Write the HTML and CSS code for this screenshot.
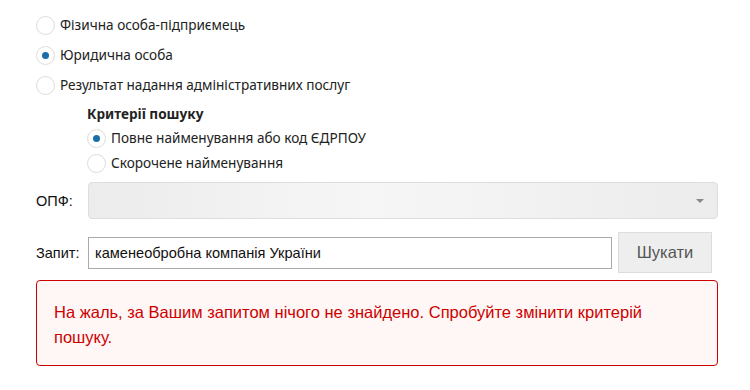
FILE: index.html
```html
<!DOCTYPE html>
<html lang="uk">

<head>
    <meta charset="UTF-8">
    <meta name="viewport" content="width=device-width, initial-scale=1.0">
    <title>Пошук</title>
    <link rel="stylesheet" href="styles.css">
</head>

<body>
    <div class="search-form">
        <div class="types">
            <label class="radio"><span class="dot"></span>Фізична особа-підприємець</label>
            <label class="radio"><span class="dot checked"></span>Юридична особа</label>
            <label class="radio"><span class="dot"></span>Результат надання адміністративних послуг</label>
        </div>
        <div class="criteria">
            <div class="criteria-title">Критерії пошуку</div>
            <label class="radio small"><span class="dot checked"></span>Повне найменування або код ЄДРПОУ</label>
            <label class="radio small"><span class="dot"></span>Скорочене найменування</label>
        </div>
        <div class="row opf">
            <span class="label">ОПФ:</span>
            <div class="select"><span class="arrow"></span></div>
        </div>
        <div class="row query">
            <span class="label">Запит:</span>
            <input type="text" value="каменеобробна компанія України" spellcheck="false">
            <button>Шукати</button>
        </div>
        <div class="error">
            На жаль, за Вашим запитом нічого не знайдено. Спробуйте змінити критерій пошуку.
        </div>
    </div>
</body>

</html>
```

FILE: styles.css
```css
* {
    margin: 0;
    padding: 0;
    box-sizing: border-box;
}

body {
    background: #fff;
    font-family: 'Noto Sans', sans-serif;
    color: #222;
}

.search-form {
    padding: 15px 32px 0 36px;
}

.types {
    display: flex;
    flex-direction: column;
    gap: 10px;
}

.radio {
    display: flex;
    align-items: center;
    font-size: 13.6px;
    line-height: 20px;
    color: #222;
}

.dot {
    width: 19px;
    height: 19px;
    border: 1px solid #ddd;
    border-radius: 50%;
    margin-right: 5px;
    display: flex;
    align-items: center;
    justify-content: center;
    flex-shrink: 0;
}

.dot.checked::after {
    content: '';
    width: 7px;
    height: 7px;
    border-radius: 50%;
    background: #1a6fa8;
}

.criteria {
    padding-left: 51px;
    margin-top: 10px;
    display: flex;
    flex-direction: column;
    gap: 5px;
}

.criteria-title {
    font-weight: bold;
    font-size: 13.6px;
    line-height: 18px;
}

.row {
    display: flex;
    align-items: center;
}

.label {
    width: 52px;
    font-family: 'Liberation Sans', sans-serif;
    font-size: 14.5px;
    color: #111;
}

.opf {
    margin-top: 9px;
}

.select {
    flex: 1;
    height: 37px;
    border: 1px solid #ddd;
    border-radius: 4px;
    background: linear-gradient(90deg, #ececec, #f6f6f6 45%, #ececec);
    position: relative;
}

.arrow {
    position: absolute;
    right: 13px;
    top: 16px;
    border-left: 4px solid transparent;
    border-right: 4px solid transparent;
    border-top: 4px solid #888;
}

.query {
    margin-top: 13px;
}

.query input {
    flex: 1;
    height: 32px;
    border: 1px solid #aaa;
    outline: 0;
    padding: 0 6px;
    font-family: 'Liberation Sans', sans-serif;
    font-size: 14.6px;
    color: #111;
}

.query button {
    width: 94px;
    height: 41px;
    margin-left: 6px;
    margin-right: 6px;
    border: 1px solid #ddd;
    background: #eee;
    color: #555;
    font-family: 'Liberation Sans', sans-serif;
    font-size: 16.5px;
}

.error {
    margin-top: 7px;
    border: 1px solid #cc0000;
    border-radius: 4px;
    background: #fff7f5;
    color: #cc0000;
    font-family: 'Liberation Sans', sans-serif;
    font-size: 16.5px;
    line-height: 25px;
    padding: 19px 70px 15px 17px;
}
```
